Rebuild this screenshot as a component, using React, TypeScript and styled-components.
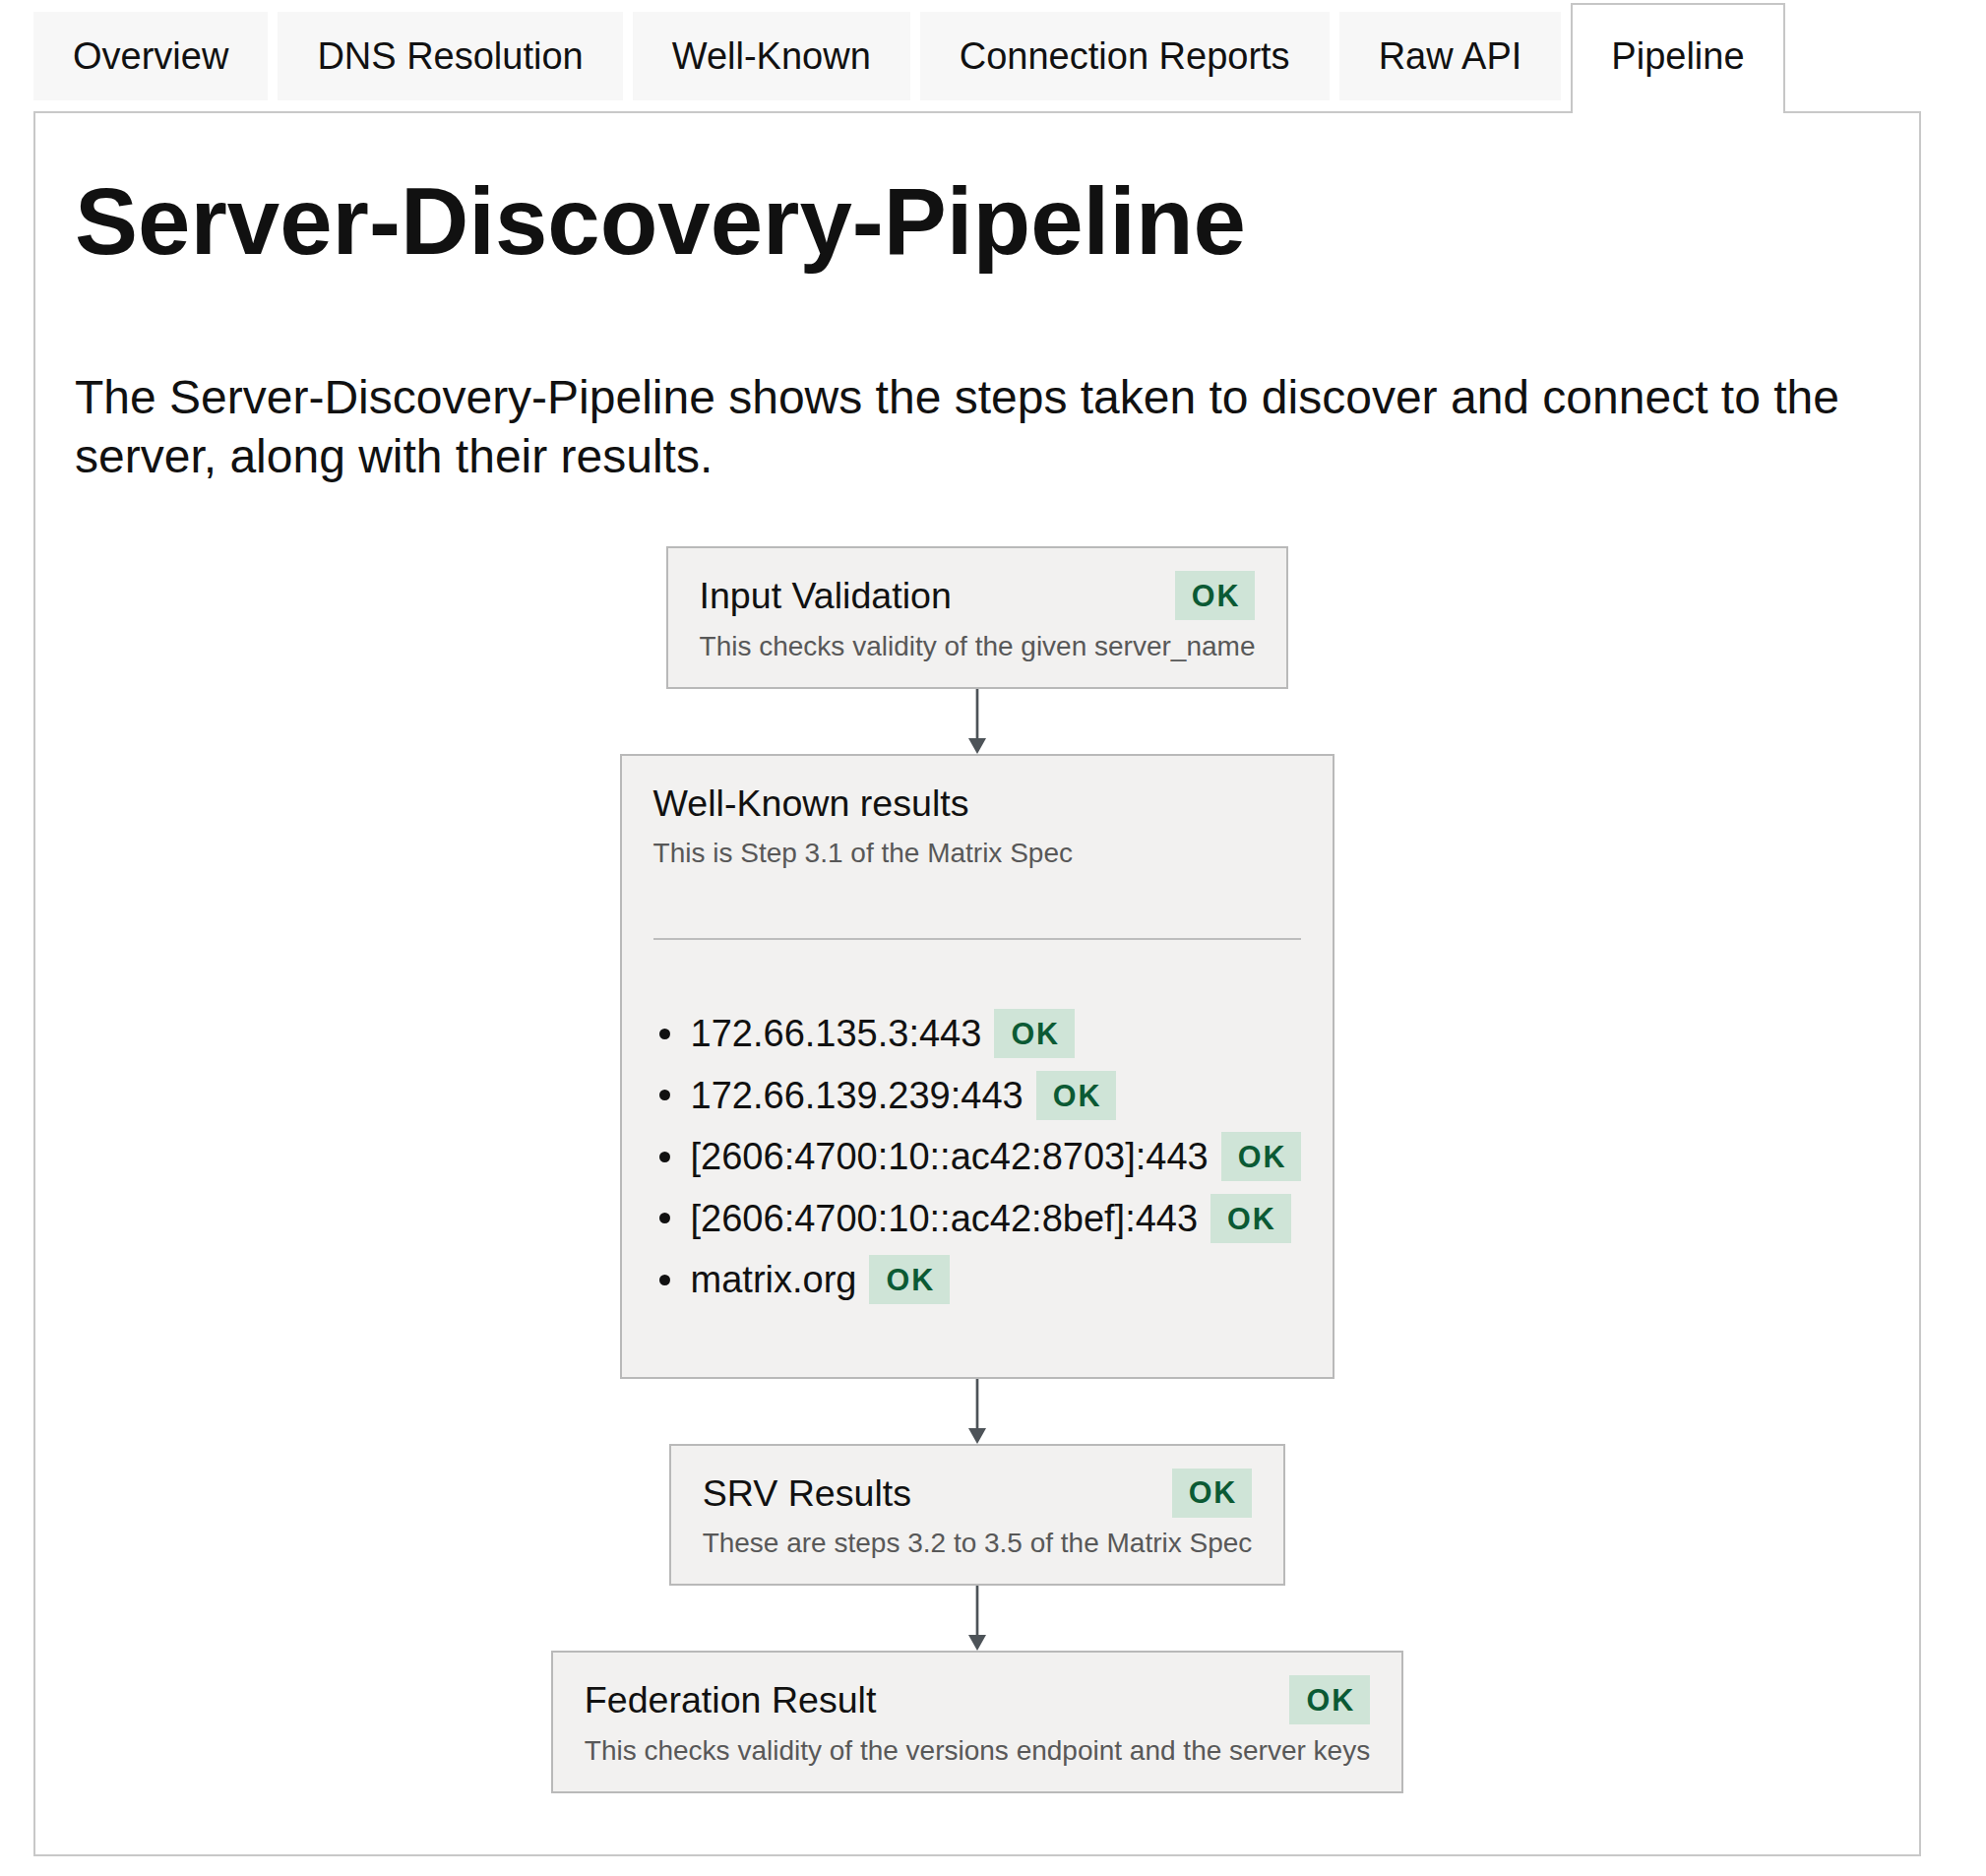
import React from "react";
import styled, { createGlobalStyle } from "styled-components";

const GlobalStyle = createGlobalStyle`
  html, body {
    margin: 0;
    padding: 0;
    background: #ffffff;
  }
  body {
    font-family: "Liberation Sans", Arial, Helvetica, sans-serif;
    color: #111111;
  }
  * { box-sizing: border-box; }
`;

const Page = styled.div`
  padding: 3px 66px 19px 34px;
`;

const TabBar = styled.nav`
  display: flex;
  align-items: flex-end;
  gap: 10px;
  position: relative;
  z-index: 1;
`;

const Tab = styled.div<{ $active?: boolean }>`
  font-size: 38px;
  line-height: 44px;
  color: #111111;
  white-space: nowrap;
  padding: ${(p) => (p.$active ? "30px 39px 36px" : "23px 40px")};
  background: ${(p) => (p.$active ? "#ffffff" : "#f7f7f7")};
  border: ${(p) => (p.$active ? "2px solid #c6c6c6" : "none")};
  border-bottom: none;
  margin-bottom: ${(p) => (p.$active ? "-2px" : "11px")};
`;

const Panel = styled.section`
  border: 2px solid #c8c8c8;
  padding: 55px 40px 62px 40px;
`;

const Title = styled.h1`
  margin: 0;
  font-size: 96px;
  line-height: 110px;
  font-weight: 700;
  color: #111111;
`;

const Intro = styled.p`
  margin: 94px 0 0;
  font-size: 48px;
  line-height: 60px;
  color: #111111;
`;

const Pipeline = styled.div`
  margin-top: 61px;
  display: flex;
  flex-direction: column;
  align-items: center;
`;

const StepBox = styled.div`
  border: 2px solid #b9b9b9;
  background: #f2f1f0;
  padding: 23px 32px 25px;
`;

const StepHeader = styled.div`
  display: flex;
  align-items: center;
  justify-content: space-between;
  gap: 40px;
  min-height: 50px;
`;

const StepTitle = styled.div`
  font-size: 37.6px;
  line-height: 44px;
  color: #111111;
  white-space: nowrap;
`;

const StepDesc = styled.div`
  margin-top: 9.5px;
  font-size: 28px;
  line-height: 33px;
  color: #585858;
  white-space: nowrap;
`;

const Badge = styled.span<{ $inline?: boolean }>`
  display: inline-flex;
  align-items: center;
  height: 50px;
  padding: 0 15px 0 17px;
  margin-left: ${(p) => (p.$inline ? "13px" : "0")};
  background: #cfe4d7;
  color: #0b5a34;
  font-size: 30.5px;
  font-weight: 700;
  letter-spacing: 2px;
  flex-shrink: 0;
`;

const Divider = styled.div`
  height: 2px;
  background: #bdbdbd;
  margin: 70px 0 64px;
`;

const AddressList = styled.ul`
  list-style: none;
  margin: 0 0 42px;
  padding: 0 0 0 6px;
`;

const AddressItem = styled.li`
  display: flex;
  align-items: center;
  height: 62.5px;
  font-size: 38px;
  line-height: 44px;
  color: #111111;
  white-space: nowrap;

  &::before {
    content: "";
    width: 11px;
    height: 11px;
    border-radius: 50%;
    background: #111111;
    margin-right: 21px;
    flex-shrink: 0;
  }
`;

const ArrowWrap = styled.div`
  display: flex;
  justify-content: center;
  height: 66px;
`;

const Arrow = () => (
  <ArrowWrap>
    <svg width="18" height="66" viewBox="0 0 18 66">
      <line x1="9" y1="0" x2="9" y2="52" stroke="#4d5358" strokeWidth="2.7" />
      <polygon points="0,50 18,50 9,66" fill="#4d5358" />
    </svg>
  </ArrowWrap>
);

const tabs = [
  "Overview",
  "DNS Resolution",
  "Well-Known",
  "Connection Reports",
  "Raw API",
  "Pipeline",
];

const addresses = [
  "172.66.135.3:443",
  "172.66.139.239:443",
  "[2606:4700:10::ac42:8703]:443",
  "[2606:4700:10::ac42:8bef]:443",
  "matrix.org",
];

type StepProps = { title: string; desc: string };

const SimpleStep = ({ title, desc }: StepProps) => (
  <StepBox>
    <StepHeader>
      <StepTitle>{title}</StepTitle>
      <Badge>OK</Badge>
    </StepHeader>
    <StepDesc>{desc}</StepDesc>
  </StepBox>
);

export default function App() {
  return (
    <>
      <GlobalStyle />
      <Page>
        <TabBar>
          {tabs.map((t) => (
            <Tab key={t} $active={t === "Pipeline"}>
              {t}
            </Tab>
          ))}
        </TabBar>
        <Panel>
          <Title>Server-Discovery-Pipeline</Title>
          <Intro>
            The Server-Discovery-Pipeline shows the steps taken to discover and
            connect to the server, along with their results.
          </Intro>
          <Pipeline>
            <SimpleStep
              title="Input Validation"
              desc="This checks validity of the given server_name"
            />
            <Arrow />
            <StepBox>
              <StepHeader>
                <StepTitle>Well-Known results</StepTitle>
              </StepHeader>
              <StepDesc>This is Step 3.1 of the Matrix Spec</StepDesc>
              <Divider />
              <AddressList>
                {addresses.map((a) => (
                  <AddressItem key={a}>
                    {a}
                    <Badge $inline>OK</Badge>
                  </AddressItem>
                ))}
              </AddressList>
            </StepBox>
            <Arrow />
            <SimpleStep
              title="SRV Results"
              desc="These are steps 3.2 to 3.5 of the Matrix Spec"
            />
            <Arrow />
            <SimpleStep
              title="Federation Result"
              desc="This checks validity of the versions endpoint and the server keys"
            />
          </Pipeline>
        </Panel>
      </Page>
    </>
  );
}
